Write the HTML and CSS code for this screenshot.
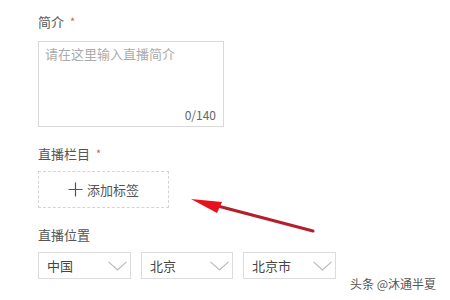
FILE: index.html
```html
<!DOCTYPE html>
<html lang="zh-CN">
<head>
<meta charset="utf-8">
<title>直播设置</title>
<link rel="stylesheet" href="styles.css">
</head>
<body>
<div class="page">
  <form class="form">
    <div class="label first">简介<span class="req">*</span></div>
    <div class="textbox">
      <div class="placeholder">请在这里输入直播简介</div>
      <div class="counter">0/140</div>
    </div>

    <div class="label">直播栏目<span class="req">*</span></div>
    <div class="tagbox">
      <svg class="plus" width="15" height="15" viewBox="0 0 15 15"><path d="M7.5 0.5V14.5M0.5 7.5H14.5" stroke="#555" stroke-width="1.2" fill="none"/></svg>
      <span>添加标签</span>
    </div>

    <div class="label">直播位置</div>
    <div class="selects">
      <div class="select w1"><span>中国</span><svg class="chev" width="19" height="10" viewBox="0 0 19 10"><path d="M0.5 0.8L9.5 9L18.5 0.8" stroke="#b8b8b8" stroke-width="1.1" fill="none"/></svg></div>
      <div class="select w2"><span>北京</span><svg class="chev" width="19" height="10" viewBox="0 0 19 10"><path d="M0.5 0.8L9.5 9L18.5 0.8" stroke="#b8b8b8" stroke-width="1.1" fill="none"/></svg></div>
      <div class="select w1"><span>北京市</span><svg class="chev" width="19" height="10" viewBox="0 0 19 10"><path d="M0.5 0.8L9.5 9L18.5 0.8" stroke="#b8b8b8" stroke-width="1.1" fill="none"/></svg></div>
    </div>
  </form>

  <svg class="arrow" width="450" height="300" viewBox="0 0 450 300">
    <line x1="313" y1="231" x2="214" y2="205" stroke="#b3202c" stroke-width="3" stroke-linecap="round"/>
    <polygon points="191,199 222,202 217,213" fill="#e8121c"/>
  </svg>

  <div class="watermark">头条 @沐通半夏</div>
</div>
</body>
</html>
```

FILE: styles.css
```css
html, body {
  margin: 0;
  padding: 0;
  background: #fff;
}
body {
  width: 450px;
  height: 300px;
  overflow: hidden;
  font-family: "Noto Sans CJK SC", "Noto Sans", "Liberation Sans", sans-serif;
  color: #555;
}
.page {
  position: relative;
  width: 450px;
  height: 300px;
}
.form {
  display: flex;
  flex-direction: column;
  align-items: flex-start;
  padding: 14px 0 0 38px;
}
.label {
  height: 16px;
  line-height: 16px;
  font-size: 13px;
  color: #555;
  margin-top: 19px;
  margin-bottom: 9px;
  display: flex;
  align-items: flex-start;
}
.label.first {
  margin-top: 0;
  margin-bottom: 11px;
}
.req {
  color: #e0565b;
  font-size: 11px;
  line-height: 14px;
  margin-left: 6px;
}
.textbox {
  box-sizing: border-box;
  width: 186px;
  height: 86px;
  border: 1px solid #d9d9d9;
  display: flex;
  flex-direction: column;
  padding: 3px 7px 3px 6px;
}
.placeholder {
  font-size: 13px;
  line-height: 18px;
  color: #ababab;
}
.counter {
  margin-top: auto;
  align-self: flex-end;
  font-size: 12px;
  line-height: 16px;
  color: #666;
}
.tagbox {
  box-sizing: border-box;
  width: 131px;
  height: 37px;
  border: 1px dashed #d4d4d4;
  display: flex;
  align-items: center;
  justify-content: center;
  gap: 4px;
  font-size: 13px;
  color: #555;
}
.plus {
  display: block;
}
.selects {
  display: flex;
  gap: 10px;
}
.select {
  box-sizing: border-box;
  height: 27px;
  border: 1px solid #dcdcdc;
  display: flex;
  align-items: center;
  justify-content: space-between;
  padding: 0 3px 0 8px;
  font-size: 13px;
  color: #444;
}
.select.w1 { width: 93px; }
.select.w2 { width: 92px; }
.chev {
  display: block;
}
.arrow {
  position: absolute;
  left: 0;
  top: 0;
  pointer-events: none;
}
.watermark {
  position: absolute;
  left: 350px;
  top: 276px;
  font-size: 12px;
  line-height: 16px;
  color: #555;
}
```
